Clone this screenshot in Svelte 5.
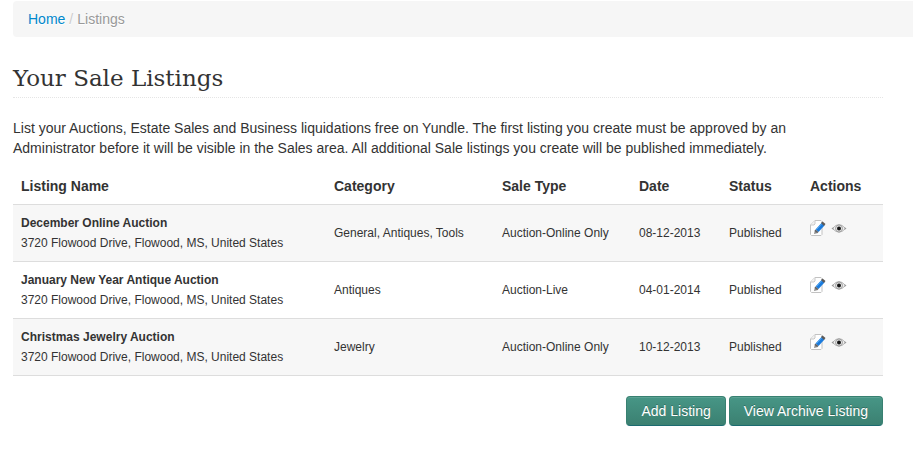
<!-- Sale listings page -->

<script lang="ts">
  type Listing = {
    name: string;
    address: string;
    category: string;
    saleType: string;
    date: string;
    status: string;
  };

  const address = '3720 Flowood Drive, Flowood, MS, United States';

  let listings: Listing[] = [
    { name: 'December Online Auction', address, category: 'General, Antiques, Tools', saleType: 'Auction-Online Only', date: '08-12-2013', status: 'Published' },
    { name: 'January New Year Antique Auction', address, category: 'Antiques', saleType: 'Auction-Live', date: '04-01-2014', status: 'Published' },
    { name: 'Christmas Jewelry Auction', address, category: 'Jewelry', saleType: 'Auction-Online Only', date: '10-12-2013', status: 'Published' }
  ];
</script>

<svelte:head>
  <title>Your Sale Listings</title>
</svelte:head>

<div class="page">
  <nav class="breadcrumb" aria-label="Breadcrumb">
    <a href="/">Home</a>
    <span class="divider">/</span>
    <span class="current">Listings</span>
  </nav>

  <main class="content">
    <h1>Your Sale Listings</h1>

    <p>
      List your Auctions, Estate Sales and Business liquidations free on Yundle. The first listing you create must be approved by an
      Administrator before it will be visible in the Sales area. All additional Sale listings you create will be published immediately.
    </p>

    <table>
      <thead>
        <tr>
          <th>Listing Name</th>
          <th class="category">Category</th>
          <th class="type">Sale Type</th>
          <th class="date">Date</th>
          <th class="status">Status</th>
          <th class="actions">Actions</th>
        </tr>
      </thead>
      <tbody>
        {#each listings as listing}
          <tr>
            <td><strong>{listing.name}</strong><br />{listing.address}</td>
            <td>{listing.category}</td>
            <td>{listing.saleType}</td>
            <td>{listing.date}</td>
            <td>{listing.status}</td>
            <td>
              <div class="icons">
                <a href="/listings/edit" aria-label="Edit {listing.name}">
                  <svg width="16" height="16" viewBox="0 0 16 16">
                    <!-- sheet with a folded corner -->
                    <path d="M5 .5h6l1 1v13l-1 1H1.500l-1-1V5z" fill="#fefefe" stroke="#c2c2c2" />
                    <path d="M5 .5v3.500L4 5H.5" fill="#f1f1f1" stroke="#c8c8c8" />
                    <!-- pencil -->
                    <path d="M4 14l1-4 3 3z" fill="#8a8a8a" />
                    <path d="M5.500 9.500L11.500 3l3 2.500L8.500 12z" fill="#1b7bdd" />
                    <path d="M6.500 9.500l5.500-6" stroke="#55a9f0" />
                    <path d="M11 3l1.500-1.500L15.500 4 14 6z" fill="#5d5a58" />
                    <path d="M5.500 9.500l3 2.500-1 1-3-2z" fill="#5f6266" />
                  </svg>
                </a>
                <a href="/listings/view" aria-label="View {listing.name}">
                  <svg width="16" height="16" viewBox="0 0 16 16">
                    <path d="M1.500 8.500Q8 .5 14.500 8.500Q8 16 1.500 8.500z" fill="#f2f2f2" stroke="#b8b8b8" />
                    <path d="M.5 8.500l2-1.500v3zM15.500 8.500l-2-1.500v3z" fill="#999" />
                    <circle cx="8" cy="8.500" r="3.500" fill="#e2e2e2" stroke="#a0a0a0" />
                    <circle cx="8" cy="8.500" r="2" fill="#161616" />
                  </svg>
                </a>
              </div>
            </td>
          </tr>
        {/each}
      </tbody>
    </table>

    <div class="buttons">
      <button type="button">Add Listing</button>
      <button type="button">View Archive Listing</button>
    </div>
  </main>
</div>

<style>
  :global(body) {
    margin: 0;
    background: #fff;
  }

  .page {
    padding: 1px 0 24px 13px;
    color: #333;
    font-family: "Liberation Sans", Arial, sans-serif;
    font-size: 14px;
    line-height: 20px;
  }

  .breadcrumb {
    display: flex;
    gap: 4px;
    padding: 8px 15px;
    background: #f6f6f6;
    border-radius: 4px 0 0 4px;
    text-shadow: 0 1px 0 #fff;
  }

  .breadcrumb a {
    color: #08c;
    text-decoration: none;
  }

  .divider {
    color: #ccc;
  }

  .current {
    color: #999;
  }

  .content {
    padding: 22px 30px 0 0;
  }

  h1 {
    margin: 0 0 20px;
    border-bottom: 1px dotted #e5e5e5;
    font-family: "Roboto Slab", "DejaVu Serif", serif;
    font-size: 23px;
    font-weight: 400;
    line-height: 38px;
  }

  p {
    margin: 0 0 10px;
    padding-right: 40px;
  }

  table {
    width: 100%;
    table-layout: fixed;
    border-collapse: collapse;
    border-bottom: 1px solid #ddd;
  }

  th,
  td {
    padding: 8px;
    text-align: left;
  }

  td {
    border-top: 1px solid #ddd;
    font-size: 12px;
    vertical-align: middle;
  }

  tbody tr:nth-child(odd) {
    background: #f7f7f7;
  }

  .category {
    width: 152px;
  }

  .type {
    width: 121px;
  }

  .date {
    width: 74px;
  }

  .status,
  .actions {
    width: 65px;
  }

  .icons {
    display: flex;
    gap: 5px;
    padding-bottom: 10px;
  }

  .icons svg {
    display: block;
  }

  .buttons {
    display: flex;
    justify-content: flex-end;
    gap: 3px;
    margin-top: 20px;
  }

  button {
    padding: 4px 14px;
    border: 1px solid #388071;
    border-bottom-color: #1b6b70;
    border-radius: 4px;
    background: linear-gradient(#479686, #3b8071);
    box-shadow: inset 0 1px 0 #5ba293;
    color: #fff;
    font: inherit;
    text-shadow: 0 -1px 0 rgba(0, 0, 0, 0.25);
    cursor: pointer;
  }
</style>
